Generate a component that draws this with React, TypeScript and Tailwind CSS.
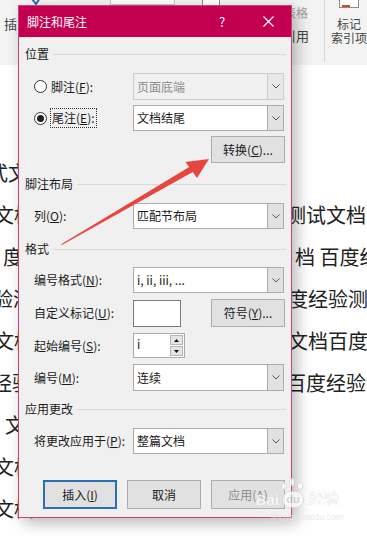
import React from "react";

const cjk = "font-['Noto_Sans_CJK_SC','Noto_Sans',sans-serif]";

interface DOCROW_TYPES {
  left: string;
  leftOffset: string;
  right: string;
  rightOffset: string;
}

const docRows: DOCROW_TYPES[] = [
  { left: "式文档", leftOffset: "ml-[-12px]", right: "", rightOffset: "ml-0" },
  { left: "文档", leftOffset: "ml-[-6px]", right: "测试文档百度", rightOffset: "ml-[-3px]" },
  { left: "度", leftOffset: "ml-[3px]", right: "档 百度经", rightOffset: "ml-[6px]" },
  { left: "验测", leftOffset: "ml-[-7px]", right: "度经验测试", rightOffset: "ml-[-1px]" },
  { left: "文档", leftOffset: "ml-[-6px]", right: "文档百度经", rightOffset: "ml-[-1px]" },
  { left: "经验", leftOffset: "ml-[-8px]", right: "百度经验测", rightOffset: "ml-[-3px]" },
  { left: "文", leftOffset: "ml-[5px]", right: "", rightOffset: "ml-0" },
  { left: "文档", leftOffset: "ml-[-6px]", right: "", rightOffset: "ml-0" },
  { left: "文档", leftOffset: "ml-[-6px]", right: "", rightOffset: "ml-0" },
];

const Chevron = () => (
  <svg width="8" height="5" viewBox="0 0 8 5">
    <path d="M0.5 0.5 L4 4 L7.5 0.5" fill="none" stroke="#555" strokeWidth="1" />
  </svg>
);

const Select: React.FC<{ value: string; disabled?: boolean; h?: string }> = ({
  value,
  disabled,
  h = "h-[26px]",
}) => {
  return (
    <div
      className={`w-[151px] ${h} flex border ${
        disabled ? "border-[#cccccc] bg-[#f0f0f0] text-[#8c8c8c]" : "border-[#acacac] bg-white text-[#1a1a1a]"
      }`}
    >
      <div className="flex-1 flex items-center pl-[3px] text-[12px]">{value}</div>
      <div
        className={`w-[16px] flex items-center justify-center border-l ${
          disabled ? "border-[#cccccc] bg-[#e8e8e8]" : "border-[#acacac] bg-[#e1e1e1]"
        }`}
      >
        <Chevron />
      </div>
    </div>
  );
};

const Btn: React.FC<{ children: React.ReactNode; primary?: boolean; disabled?: boolean; h?: string }> = ({
  children,
  primary,
  disabled,
  h = "h-[27px]",
}) => (
  <div
    className={`w-[74px] ${h} flex items-center justify-center text-[12px] bg-[#e1e1e1] ${
      primary ? "border-2 border-[#2b6fb0]" : "border border-[#adadad]"
    } ${disabled ? "text-[#8c8c8c]" : "text-[#1a1a1a]"}`}
  >
    {children}
  </div>
);

const SectionLabel: React.FC<{ title: string; className?: string }> = ({ title, className }) => (
  <div className={`flex items-center h-[16px] gap-[4px] ${className}`}>
    <span className="text-[12px] text-[#1a1a1a]">{title}</span>
    <div className="flex-1 h-px bg-[#dadada] mr-[-1px]" />
  </div>
);

const Row: React.FC<{ label: React.ReactNode; children: React.ReactNode; className?: string }> = ({
  label,
  children,
  className,
}) => (
  <div className={`flex items-center ${className}`}>
    <div className="w-[108px] pl-[9px] text-[12px] text-[#1a1a1a] shrink-0">{label}</div>
    {children}
  </div>
);

const Radio: React.FC<{ checked?: boolean }> = ({ checked }) => (
  <div className="w-[13px] h-[13px] rounded-full border border-[#333] bg-white flex items-center justify-center">
    {checked && <div className="w-[7px] h-[7px] rounded-full bg-[#222]" />}
  </div>
);

export default function App() {
  return (
    <div className={`relative w-[367px] h-[536px] overflow-hidden bg-white ${cjk}`}>
      {/* ribbon */}
      <div className="h-[65px] bg-[#f3f3f3] relative flex">
        <div className="w-[332px] relative">
          <div className="absolute left-[31px] top-[-2px]">
            <svg width="12" height="8" viewBox="0 0 12 8">
              <path d="M1 1 L5 6 L11 -3" fill="none" stroke="#2b6fb0" strokeWidth="2" />
            </svg>
          </div>
          <div className="absolute left-[110px] top-[-4px] w-[65px] h-[9px] border border-[#c8c8c8] bg-white" />
          <div className="absolute left-[202px] top-[-4px] w-[18px] h-[10px] border border-[#888] bg-white" />
          <div className="absolute left-[4px] top-[14px] text-[13px] text-[#444]">插入</div>
          <div className="absolute left-[284px] top-[4px] text-[12px] text-[#a0a0a0]">表格</div>
          <div className="absolute left-[283px] top-[26px] text-[13px] text-[#444]">引用</div>
        </div>
        <div className="w-px h-[62px] bg-[#d6d6d6]" />
        <div className="flex-1 flex flex-col items-center pl-[6px]">
          <div className="w-[20px] h-[9px] mt-[-1px] border border-[#8a8a8a] bg-white relative">
            <div className="absolute left-[2px] bottom-0 w-[8px] h-[2px] bg-[#d24726]" />
          </div>
          <div className="text-[12px] text-[#444] leading-[14px] mt-[9px] whitespace-nowrap">标记</div>
          <div className="text-[12px] text-[#444] leading-[14px] whitespace-nowrap">索引项</div>
        </div>
      </div>

      {/* document */}
      <div className="pt-[87px] text-[20px] text-[#222]">
        {docRows.map((r, i) => (
          <div key={i} className="h-[42px] flex items-center whitespace-nowrap">
            <div className="w-[289px] shrink-0 overflow-hidden">
              <span className={`inline-block ${r.leftOffset}`}>{r.left}</span>
            </div>
            <span className={`inline-block ${r.rightOffset}`}>{r.right}</span>
          </div>
        ))}
      </div>

      {/* dialog */}
      <div className="absolute left-[18px] top-[5px] w-[274px] h-[513px] border border-[#c8457a] bg-[#f0f0f0] shadow-[5px_5px_14px_rgba(0,0,0,0.28)] flex flex-col">
        <div className="h-[31px] bg-[#c3004f] flex items-center text-white shrink-0">
          <span className="pl-[8px] text-[12px]">脚注和尾注</span>
          <span className="ml-auto w-[46px] text-center text-[13px]">?</span>
          <span className="w-[46px] flex justify-center">
            <svg width="11" height="11" viewBox="0 0 11 11">
              <path d="M0.5 0.5 L10.5 10.5 M10.5 0.5 L0.5 10.5" stroke="#fff" strokeWidth="1.2" />
            </svg>
          </span>
        </div>

        <div className="flex flex-col pl-[6px] pr-[6px] pt-[9px]">
          <SectionLabel title="位置" />

          <div className="flex items-center mt-[11px]">
            <div className="w-[108px] pl-[9px] flex items-center gap-[3px] shrink-0">
              <Radio />
              <span className="text-[12px] text-[#1a1a1a] px-[1px]">
                脚注(<u>F</u>):
              </span>
            </div>
            <Select value="页面底端" disabled h="h-[27px]" />
          </div>

          <div className="flex items-center mt-[5px]">
            <div className="w-[108px] pl-[9px] flex items-center gap-[3px] shrink-0">
              <Radio checked />
              <span className="text-[12px] text-[#1a1a1a] px-[1px] border border-dotted border-[#333]">
                尾注(<u>E</u>):
              </span>
            </div>
            <Select value="文档结尾" />
          </div>

          <div className="flex justify-end mt-[5px]">
            <Btn>
              转换(<u>C</u>)...
            </Btn>
          </div>

          <SectionLabel title="脚注布局" className="mt-[13px]" />

          <Row label={<>列(<u>O</u>):</>} className="mt-[11px]">
            <Select value="匹配节布局" />
          </Row>

          <SectionLabel title="格式" className="mt-[12px]" />

          <Row label={<>编号格式(<u>N</u>):</>} className="mt-[10px]">
            <Select value="i, ii, iii, ..." />
          </Row>

          <Row label={<>自定义标记(<u>U</u>):</>} className="mt-[6px]">
            <div className="w-[48px] h-[27px] border border-[#7a7a7a] bg-white" />
            <div className="ml-auto">
              <Btn h="h-[28px]">
                符号(<u>Y</u>)...
              </Btn>
            </div>
          </Row>

          <Row label={<>起始编号(<u>S</u>):</>} className="mt-[6px]">
            <div className="w-[52px] h-[25px] border border-[#acacac] bg-white flex">
              <div className="flex-1 pl-[3px] text-[12px] text-[#1a1a1a] leading-[20px]">i</div>
              <div className="w-[14px] flex flex-col gap-px py-[1px] pr-[1px]">
                <div className="flex-1 bg-[#e5e5e5] border border-[#b5b5b5] flex items-center justify-center">
                  <svg width="5" height="3" viewBox="0 0 5 3">
                    <path d="M0 3 L2.5 0 L5 3 Z" fill="#111" />
                  </svg>
                </div>
                <div className="flex-1 bg-[#e5e5e5] border border-[#b5b5b5] flex items-center justify-center">
                  <svg width="5" height="3" viewBox="0 0 5 3">
                    <path d="M0 0 L2.5 3 L5 0 Z" fill="#111" />
                  </svg>
                </div>
              </div>
            </div>
          </Row>

          <Row label={<>编号(<u>M</u>):</>} className="mt-[6px]">
            <Select value="连续" h="h-[27px]" />
          </Row>

          <SectionLabel title="应用更改" className="mt-[10px]" />

          <Row label={<>将更改应用于(<u>P</u>):</>} className="mt-[11px]">
            <Select value="整篇文档" />
          </Row>

          <div className="flex justify-end gap-[10px] mt-[26px]">
            <Btn primary h="h-[29px]">
              插入(<u>I</u>)
            </Btn>
            <Btn h="h-[29px]">取消</Btn>
            <Btn disabled h="h-[29px]">
              应用(A)
            </Btn>
          </div>
        </div>
      </div>

      {/* baidu watermark */}
      <div className="absolute left-[251px] top-[478px] flex flex-col items-center opacity-75 pointer-events-none">
        <div className="flex items-end">
          <span className="font-['Liberation_Sans',sans-serif] text-[15px] font-bold text-white [text-shadow:0_0_1px_#bbb] leading-none mb-[3px]">
            Bai
          </span>
          <div className="relative w-[28px] h-[32px]">
            <div className="absolute left-[2px] top-[4px] w-[6px] h-[8px] rounded-full bg-white border border-[#d4d4d4]" />
            <div className="absolute left-[10px] top-0 w-[6px] h-[8px] rounded-full bg-white border border-[#d4d4d4]" />
            <div className="absolute left-[18px] top-[4px] w-[6px] h-[8px] rounded-full bg-white border border-[#d4d4d4]" />
            <div className="absolute left-[3px] top-[13px] w-[22px] h-[17px] rounded-full bg-white border border-[#d4d4d4] font-['Liberation_Sans',sans-serif] text-[11px] font-bold text-[#cfcfcf] flex items-center justify-center leading-none">
              du
            </div>
          </div>
          <span className="text-[15px] text-white [text-shadow:0_0_1px_#aaa] leading-none mb-[5px] ml-[2px]">经验</span>
        </div>
        <span className="font-['Liberation_Sans',sans-serif] text-[9px] text-[#e4e4e4] leading-none mt-[3px] ml-[20px]">
          jingyan.baidu.com
        </span>
      </div>

      {/* red arrow annotation */}
      <svg className="absolute inset-0 pointer-events-none" width="367" height="536" viewBox="0 0 367 536">
        <path d="M61 245.5 L62 243.8 L192.5 165 L195.5 170.5 Z" fill="#e5473f" />
        <path d="M209 159 L185.5 162 L197 178 Z" fill="#e5473f" />
      </svg>
    </div>
  );
}
